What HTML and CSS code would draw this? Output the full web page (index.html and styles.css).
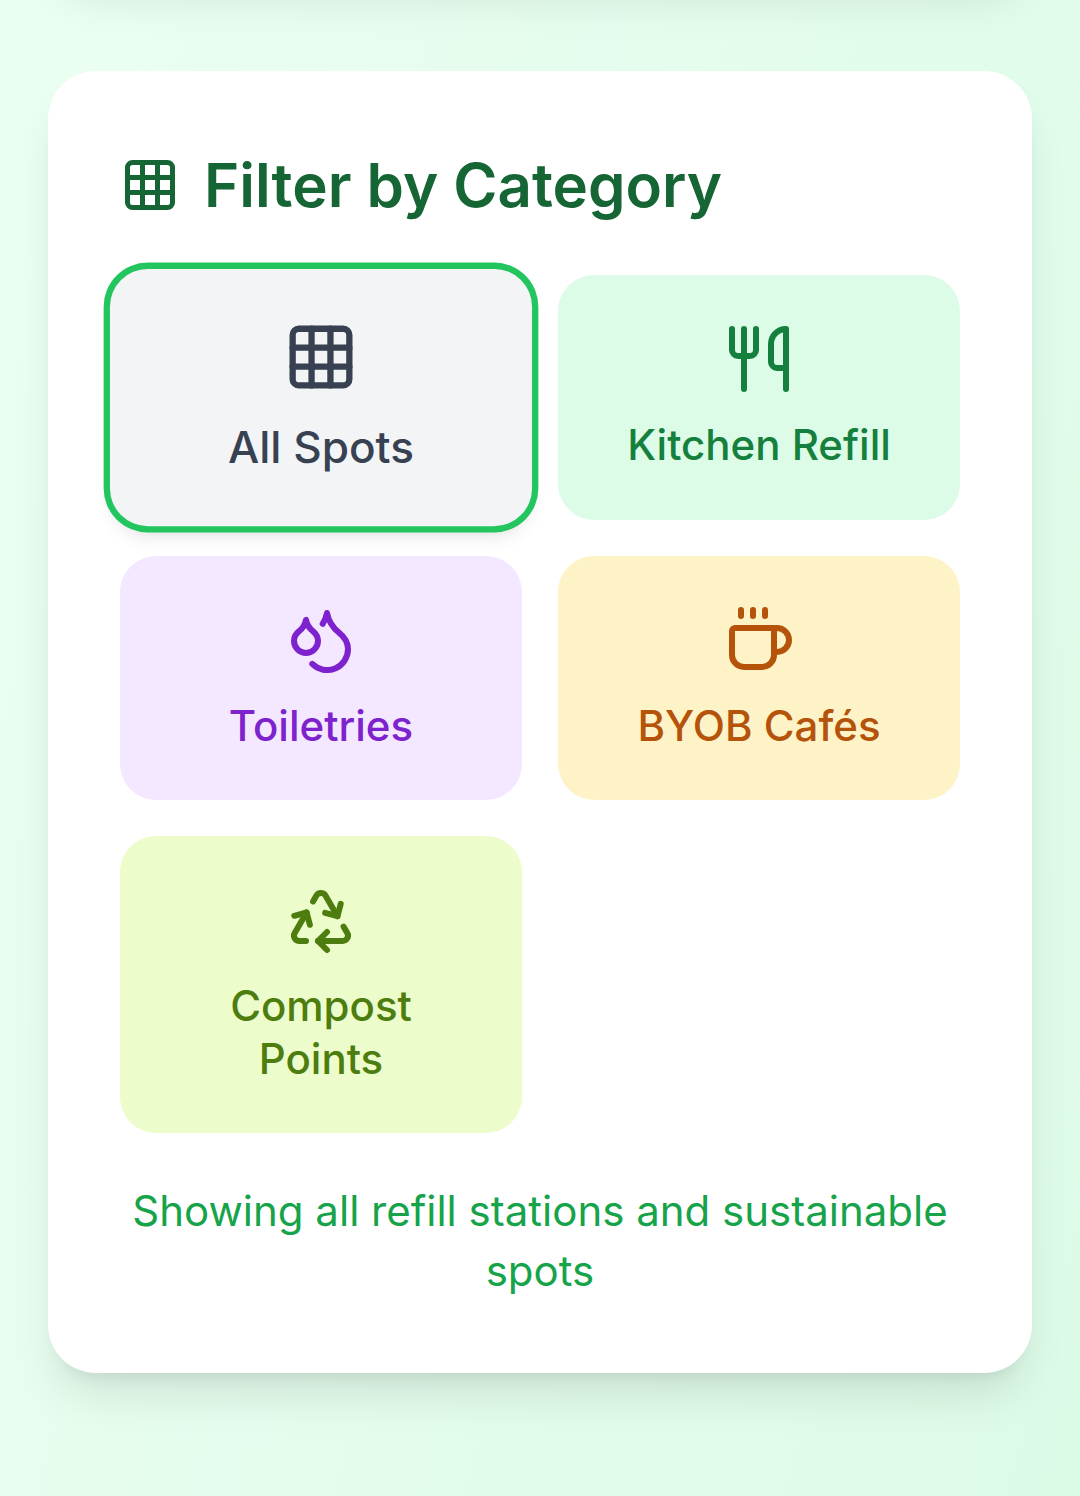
FILE: index.html
```html
<!DOCTYPE html>
<html lang="en">
<head>
    <meta charset="UTF-8">
    <meta name="viewport" content="width=device-width, initial-scale=1.0">
    <title>Filter by Category</title>
    <link rel="stylesheet" href="styles.css">
</head>
<body>
    <main class="page">
        <div class="card card-above"></div>

        <section class="card filter-card">
            <h2 class="card-title">
                <svg class="icon title-icon" viewBox="0 0 24 24" aria-hidden="true">
                    <rect x="3" y="3" width="18" height="18" rx="2"/>
                    <path d="M3 9h18M3 15h18M9 3v18M15 3v18"/>
                </svg>
                Filter by Category
            </h2>

            <div class="categories">
                <button type="button" class="category all active">
                    <svg class="icon" viewBox="0 0 24 24" aria-hidden="true">
                        <rect x="3" y="3" width="18" height="18" rx="2"/>
                        <path d="M3 9h18M3 15h18M9 3v18M15 3v18"/>
                    </svg>
                    <span>All Spots</span>
                </button>
                <button type="button" class="category kitchen">
                    <svg class="icon" viewBox="0 0 24 24" aria-hidden="true">
                        <path d="M3 2v7c0 1.1.9 2 2 2h4a2 2 0 0 0 2-2V2"/>
                        <path d="M7 2v20"/>
                        <path d="M21 15V2a5 5 0 0 0-5 5v6c0 1.1.9 2 2 2h3Zm0 0v7"/>
                    </svg>
                    <span>Kitchen Refill</span>
                </button>
                <button type="button" class="category toiletries">
                    <svg class="icon" viewBox="0 0 24 24" aria-hidden="true">
                        <path d="M7 16.3c2.2 0 4-1.83 4-4.05 0-1.16-.57-2.26-1.71-3.19S7.29 6.75 7 5.3c-.29 1.45-1.14 2.84-2.29 3.76S3 11.1 3 12.25c0 2.22 1.8 4.05 4 4.05z"/>
                        <path d="M12.56 6.6A10.97 10.97 0 0 0 14 3.02c.5 2.5 2 4.9 4 6.5s3 3.5 3 5.5a6.98 6.98 0 0 1-11.91 4.97"/>
                    </svg>
                    <span>Toiletries</span>
                </button>
                <button type="button" class="category cafes">
                    <svg class="icon" viewBox="0 0 24 24" aria-hidden="true">
                        <path d="M6 2v2M10 2v2M14 2v2"/>
                        <path d="M16 8a1 1 0 0 1 1 1v8a4 4 0 0 1-4 4H7a4 4 0 0 1-4-4V9a1 1 0 0 1 1-1h14a4 4 0 1 1 0 8h-1"/>
                    </svg>
                    <span>BYOB Cafés</span>
                </button>
                <button type="button" class="category compost">
                    <svg class="icon" viewBox="0 0 24 24" aria-hidden="true">
                        <path d="M7 19H4.815a1.83 1.83 0 0 1-1.57-.881 1.785 1.785 0 0 1-.004-1.784L7.196 9.5"/>
                        <path d="M11 19h8.203a1.83 1.83 0 0 0 1.556-.89 1.784 1.784 0 0 0 0-1.775l-1.226-2.12"/>
                        <path d="m14 16-3 3 3 3"/>
                        <path d="M8.293 13.596 7.196 9.5 3.1 10.598"/>
                        <path d="m9.344 5.811 1.093-1.892A1.83 1.83 0 0 1 11.985 3a1.784 1.784 0 0 1 1.546.888l3.943 6.843"/>
                        <path d="m13.378 9.633 4.096 1.098 1.097-4.096"/>
                    </svg>
                    <span>Compost Points</span>
                </button>
            </div>

            <p class="status">Showing all refill stations and sustainable spots</p>
        </section>
    </main>
</body>
</html>
```
FILE: styles.css
```css
* {
    box-sizing: border-box;
}

body {
    margin: 0;
    min-height: 100vh;
    overflow-x: hidden;
    font-family: Inter, "Liberation Sans", sans-serif;
    font-optical-sizing: none;
    background: linear-gradient(105deg, #ebfef2, #dcfbe7);
}

.page {
    display: flex;
    flex-direction: column;
    gap: 96px;
    padding: 0 48px;
}

.card {
    background-color: #ffffff;
    border-radius: 48px;
    box-shadow: 0 30px 45px -9px rgba(0, 0, 0, 0.1), 0 12px 18px -12px rgba(0, 0, 0, 0.1);
}

/* the card before this one, scrolled past the top edge */
.card-above {
    height: 120px;
    margin-top: -145px;
}

.filter-card {
    padding: 72px;
}

.card-title {
    display: flex;
    align-items: center;
    gap: 24px;
    margin: 0 0 48px;
    font-size: 60px;
    font-weight: 600;
    line-height: 84px;
    color: #166534;
}

.icon {
    width: 72px;
    height: 72px;
    flex-shrink: 0;
    fill: none;
    stroke: currentColor;
    stroke-width: 2;
    stroke-linecap: round;
    stroke-linejoin: round;
}

.title-icon {
    width: 60px;
    height: 60px;
}

.categories {
    display: grid;
    grid-template-columns: 1fr 1fr;
    gap: 36px;
}

.category {
    display: flex;
    flex-direction: column;
    align-items: center;
    gap: 24px;
    padding: 48px;
    border: none;
    border-radius: 36px;
    font-family: inherit;
    font-size: 42px;
    font-weight: 500;
    line-height: 1.25;
    text-align: center;
    cursor: pointer;
}

.category.active {
    transform: scale(1.05);
    box-shadow: 0 0 0 6px #22c55e, 0 12px 18px -3px rgba(0, 0, 0, 0.1), 0 6px 12px -6px rgba(0, 0, 0, 0.1);
}

.all {
    background-color: #f3f4f6;
    color: #374151;
}

.kitchen {
    background-color: #dcfce7;
    color: #15803d;
}

.toiletries {
    background-color: #f3e8ff;
    color: #7e22ce;
}

.cafes {
    background-color: #fef3c7;
    color: #b45309;
}

.compost {
    background-color: #ecfccb;
    color: #4d7c0f;
}

.status {
    margin: 48px 0 0;
    font-size: 42px;
    line-height: 60px;
    text-align: center;
    color: #16a34a;
}
```
